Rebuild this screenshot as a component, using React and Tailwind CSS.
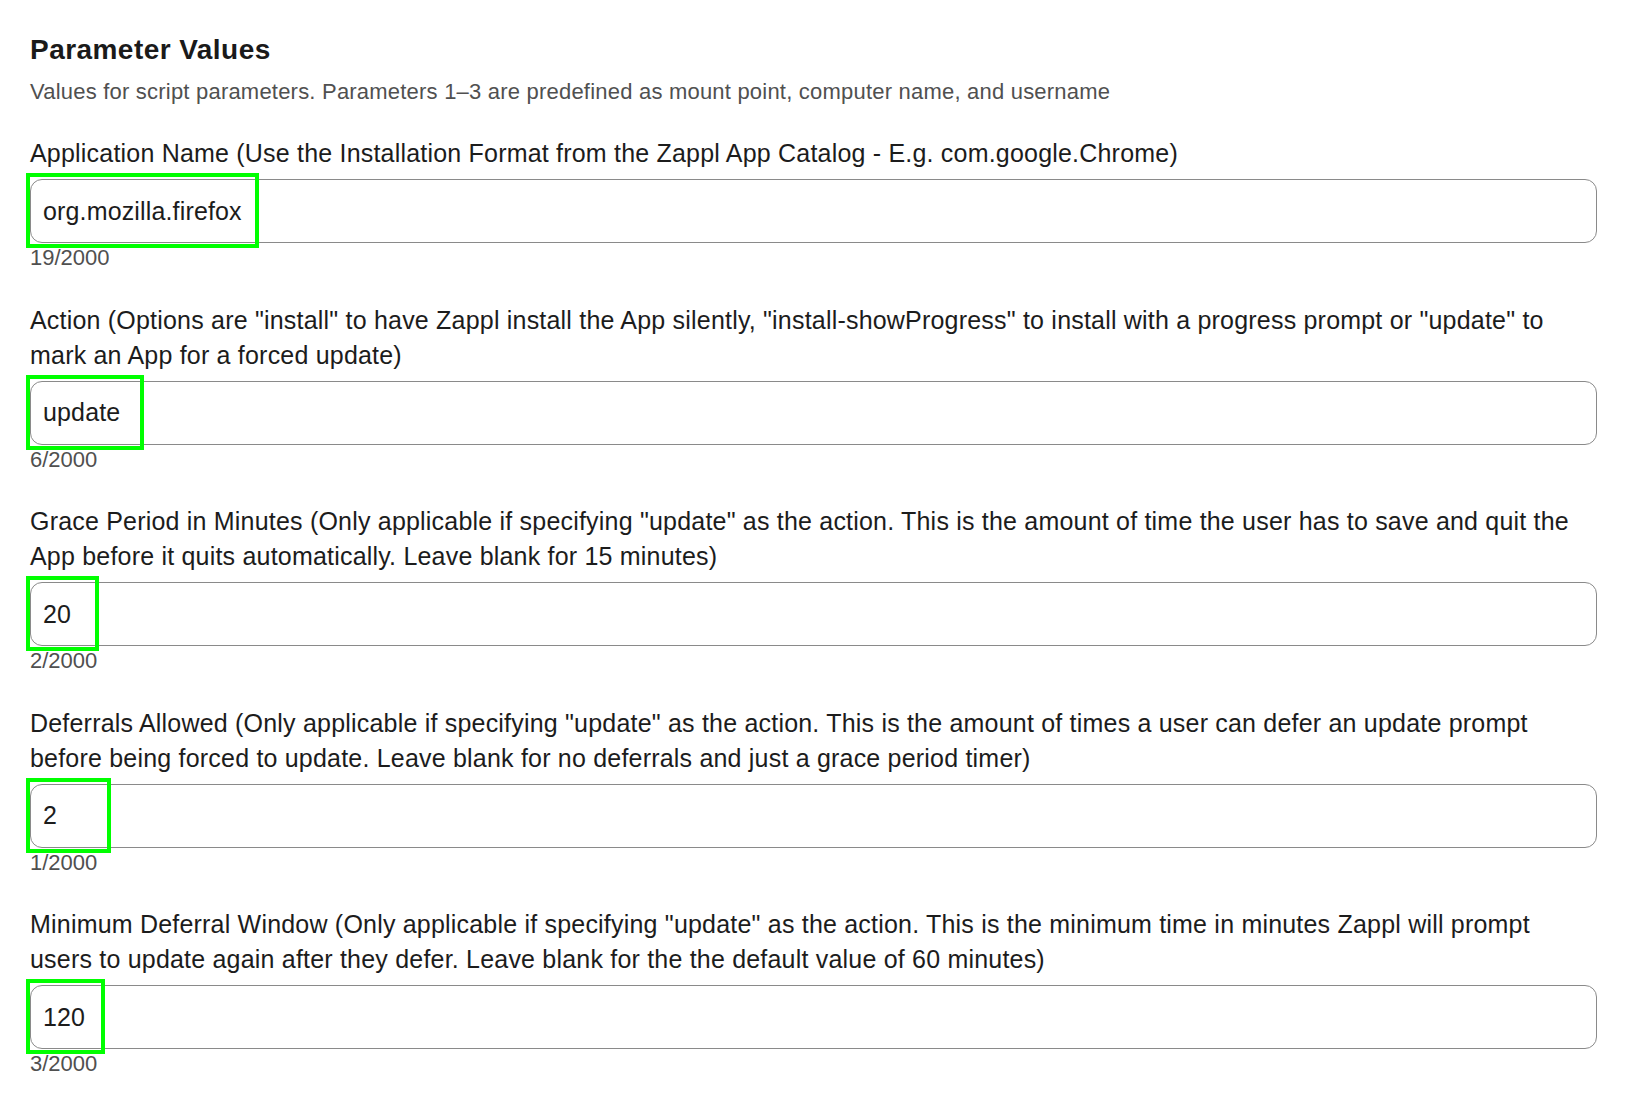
import React from "react";

// label lines are broken where the form breaks them
const fields = [
  {
    label: [
      "Application Name (Use the Installation Format from the Zappl App Catalog - E.g. com.google.Chrome)",
    ],
    value: "org.mozilla.firefox",
    mark: "w-[233px]",
  },
  {
    label: [
      'Action (Options are "install" to have Zappl install the App silently, "install-showProgress" to install with a progress prompt or "update" to',
      "mark an App for a forced update)",
    ],
    value: "update",
    mark: "w-[118px]",
  },
  {
    label: [
      'Grace Period in Minutes (Only applicable if specifying "update" as the action. This is the amount of time the user has to save and quit the',
      "App before it quits automatically. Leave blank for 15 minutes)",
    ],
    value: "20",
    mark: "w-[73px]",
  },
  {
    label: [
      'Deferrals Allowed (Only applicable if specifying "update" as the action. This is the amount of times a user can defer an update prompt',
      "before being forced to update. Leave blank for no deferrals and just a grace period timer)",
    ],
    value: "2",
    mark: "w-[85px]",
  },
  {
    label: [
      'Minimum Deferral Window (Only applicable if specifying "update" as the action. This is the minimum time in minutes Zappl will prompt',
      "users to update again after they defer. Leave blank for the the default value of 60 minutes)",
    ],
    value: "120",
    mark: "w-[79px]",
  },
];

function ParamField({ label, value, mark }) {
  return (
    <div>
      <label className="block text-[25px] leading-[35px] tracking-[0.2px] text-[#1c1c1c]">
        {label.map((line, i) => (
          <React.Fragment key={i}>
            {i > 0 && <br />}
            {line}
          </React.Fragment>
        ))}
      </label>

      <div className="relative mt-2">
        <input
          readOnly
          value={value}
          className="block h-16 w-full rounded-xl border border-[#8a8a8a] bg-white px-3 text-[25px] tracking-[0.15px] text-[#1c1c1c] outline-none"
        />
        {/* highlight around the filled value */}
        <span
          className={`pointer-events-none absolute -left-1 top-[-6px] h-[75px] border-[4.5px] border-[#00ff00] ${mark}`}
        />
      </div>

      <p className="mt-[2px] text-[22px] leading-[26px] text-[#505050]">
        {value.length}/2000
      </p>
    </div>
  );
}

export default function App() {
  return (
    <div className="min-h-screen bg-white pl-[30px] pr-[29px] pt-[33px] font-['Liberation_Sans',Arial,sans-serif]">
      <h2 className="text-[28px] font-bold leading-[34px] tracking-[0.45px] text-[#1a1a1a]">
        Parameter Values
      </h2>
      <p className="mt-[10px] text-[22px] leading-[30px] tracking-[0.21px] text-[#505050]">
        Values for script parameters. Parameters 1–3 are predefined as mount point, computer name,
        and username
      </p>

      <div className="mt-[29px] flex flex-col gap-[31.5px]">
        {fields.map((f) => (
          <ParamField key={f.value} {...f} />
        ))}
      </div>
    </div>
  );
}
